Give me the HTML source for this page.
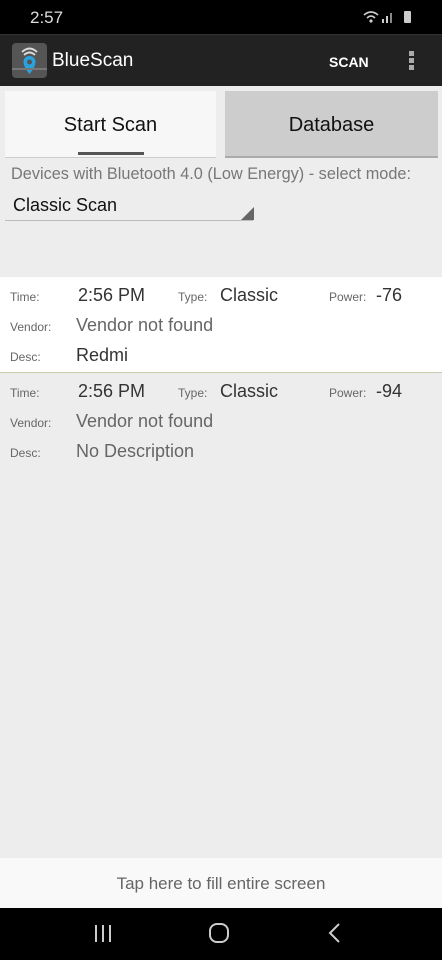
<!DOCTYPE html>
<html><head><meta charset="utf-8"><style>
*{margin:0;padding:0;box-sizing:border-box}
body{width:442px;height:960px;background:#ededed;font-family:"Liberation Sans",sans-serif;position:relative;overflow:hidden}
.abs{position:absolute}
.sb{top:0;left:0;width:442px;height:34px;background:#000;color:#ddd}
.ab{top:34px;left:0;width:442px;height:52px;background:#222;border-top:1px solid #333}
.lbl{font-size:12px;color:#666}
.val{font-size:18px;color:#333}
.g{color:#666}
</style></head><body>
<div class="abs sb"><span class="abs" style="left:30px;top:8px;font-size:17px">2:57</span>
<svg class="abs" style="left:362px;top:10px" width="54" height="14"><path d="M2 5 Q9 -1 16 5 M5 8 Q9 4 13 8" stroke="#ccc" stroke-width="1.6" fill="none"/><circle cx="9" cy="11" r="1.6" fill="#ccc"/><rect x="20" y="9" width="2" height="4" fill="#ccc"/><rect x="24" y="6" width="2" height="7" fill="#ccc"/><rect x="28" y="3" width="2" height="10" fill="#888"/><rect x="42" y="1" width="7" height="12" rx="1" fill="#ccc"/></svg></div>
<div class="abs ab">
<div class="abs" style="left:12px;top:8px;width:35px;height:35px;background:#555;border-radius:4px;overflow:hidden">
<svg width="35" height="35"><path d="M10 9 Q17.5 2 25 9 M12 12 Q17.5 7 23 12" stroke="#ddd" stroke-width="1.8" fill="none"/><path d="M17.5 13 a6 6 0 0 1 6 6 q0 5 -6 12 q-6 -7 -6 -12 a6 6 0 0 1 6 -6z" fill="#29a3e0"/><circle cx="17.5" cy="19" r="2.5" fill="#555"/><path d="M0 26 L35 26" stroke="#777" stroke-width="2"/></svg></div>
<span class="abs" style="left:52px;top:15px;color:#fff;font-size:19px">BlueScan</span>
<span class="abs" style="left:329px;top:19px;color:#fff;font-size:14px;font-weight:bold">SCAN</span>
<div class="abs" style="left:409px;top:16px;width:5px;height:5px;background:#aaa;box-shadow:0 7px 0 #aaa,0 14px 0 #aaa"></div>
</div>
<div class="abs" style="left:5px;top:91px;width:211px;height:67px;background:#f7f7f7;border-bottom:1px solid #ccc;text-align:center;font-size:20px;color:#111;padding-top:23px">Start Scan
<div class="abs" style="left:73px;top:61px;width:66px;height:3px;background:#555"></div></div>
<div class="abs" style="left:225px;top:91px;width:213px;height:67px;background:#cdcdcd;border-bottom:2px solid #aaa;text-align:center;font-size:20px;color:#111;padding-top:23px">Database</div>
<span class="abs" style="left:11px;top:165px;font-size:16.3px;color:#777">Devices with Bluetooth 4.0 (Low Energy) - select mode:</span>
<span class="abs" style="left:13px;top:195px;font-size:18px;color:#111">Classic Scan</span>
<div class="abs" style="left:5px;top:220px;width:248px;height:1px;background:#bbb"></div>
<svg class="abs" style="left:241px;top:207px" width="13" height="13"><path d="M13 0 L13 13 L0 13Z" fill="#666"/></svg>
<div class="abs" style="left:0;top:277px;width:442px;height:96px;background:#fff;border-bottom:1.5px solid #c8ccaa"></div>
<div class="abs" style="top:285px;left:0;width:442px">
<span class="abs lbl" style="left:10px;top:5px">Time:</span><span class="abs val" style="left:78px;top:0">2:56 PM</span>
<span class="abs lbl" style="left:178px;top:5px">Type:</span><span class="abs val" style="left:220px;top:0">Classic</span>
<span class="abs lbl" style="left:329px;top:5px">Power:</span><span class="abs val" style="left:376px;top:0">-76</span>
<span class="abs lbl" style="left:10px;top:35px">Vendor:</span><span class="abs val g" style="left:76px;top:30px">Vendor not found</span>
<span class="abs lbl" style="left:10px;top:65px">Desc:</span><span class="abs val" style="left:76px;top:60px">Redmi</span>
</div>
<div class="abs" style="top:381px;left:0;width:442px">
<span class="abs lbl" style="left:10px;top:5px">Time:</span><span class="abs val" style="left:78px;top:0">2:56 PM</span>
<span class="abs lbl" style="left:178px;top:5px">Type:</span><span class="abs val" style="left:220px;top:0">Classic</span>
<span class="abs lbl" style="left:329px;top:5px">Power:</span><span class="abs val" style="left:376px;top:0">-94</span>
<span class="abs lbl" style="left:10px;top:35px">Vendor:</span><span class="abs val g" style="left:76px;top:30px">Vendor not found</span>
<span class="abs lbl" style="left:10px;top:65px">Desc:</span><span class="abs val g" style="left:76px;top:60px">No Description</span>
</div>
<div class="abs" style="left:0;top:858px;width:442px;height:50px;background:#f9f9f9;text-align:center;font-size:17px;color:#666;padding-top:16px">Tap here to fill entire screen</div>
<div class="abs" style="left:0;top:908px;width:442px;height:52px;background:#000">
<svg class="abs" style="left:0;top:0" width="442" height="52"><g stroke="#ccc" stroke-width="2" fill="none"><path d="M96 17v17M103 17v17M110 17v17"/><rect x="210" y="16" width="18" height="18" rx="7"/><path d="M339 16 l-9 9 l9 9"/></g></svg>
</div>
</body></html>
